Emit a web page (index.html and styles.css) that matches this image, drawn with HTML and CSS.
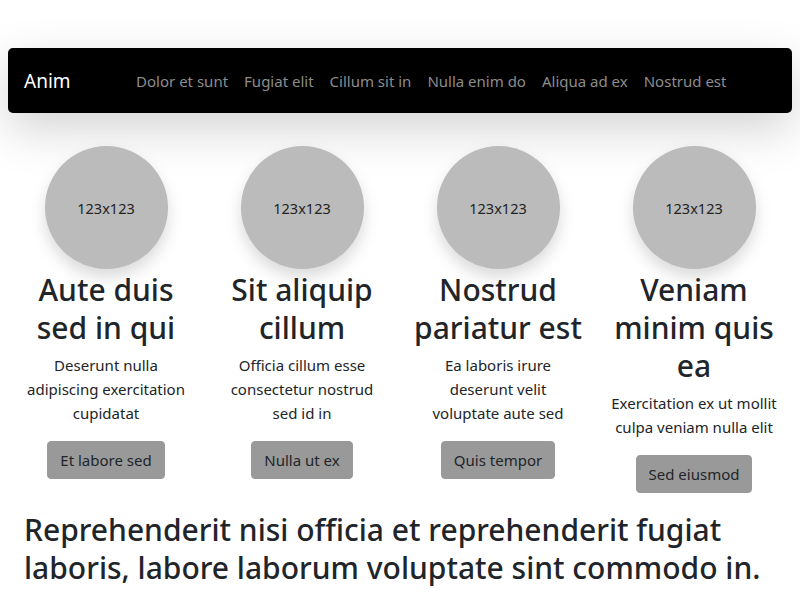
FILE: index.html
```html
<!DOCTYPE html>
<html lang="la">
<head>
<meta charset="utf-8">
<title>Anim</title>
<link rel="stylesheet" href="styles.css">
</head>
<body>
<div class="container">
  <nav class="navbar">
    <span class="brand">Anim</span>
    <ul class="nav">
      <li><a href="#">Dolor et sunt</a></li>
      <li><a href="#">Fugiat elit</a></li>
      <li><a href="#">Cillum sit in</a></li>
      <li><a href="#">Nulla enim do</a></li>
      <li><a href="#">Aliqua ad ex</a></li>
      <li><a href="#">Nostrud est</a></li>
    </ul>
  </nav>
  <div class="row">
    <div class="col">
      <div class="circle">123x123</div>
      <h2>Aute duis sed in qui</h2>
      <p>Deserunt nulla adipiscing exercitation cupidatat</p>
      <a class="btn" href="#">Et labore sed</a>
    </div>
    <div class="col">
      <div class="circle">123x123</div>
      <h2>Sit aliquip cillum</h2>
      <p>Officia cillum esse consectetur nostrud sed id in</p>
      <a class="btn" href="#">Nulla ut ex</a>
    </div>
    <div class="col">
      <div class="circle">123x123</div>
      <h2>Nostrud pariatur est</h2>
      <p>Ea laboris irure deserunt velit voluptate aute sed</p>
      <a class="btn" href="#">Quis tempor</a>
    </div>
    <div class="col">
      <div class="circle">123x123</div>
      <h2>Veniam minim quis ea</h2>
      <p>Exercitation ex ut mollit culpa veniam nulla elit</p>
      <a class="btn" href="#">Sed eiusmod</a>
    </div>
  </div>
  <h2 class="lead">Reprehenderit nisi officia et reprehenderit fugiat laboris, labore laborum voluptate sint commodo in.</h2>
</div>
</body>
</html>
```
FILE: styles.css
```css
* { box-sizing: border-box; }
html, body { margin: 0; padding: 0; }
body {
  background: #fff;
  color: #212529;
  font-family: "Noto Sans", "Open Sans", sans-serif;
  font-size: 15px;
  line-height: 24px;
}
.container {
  margin: 48px 8px 0;
}
.navbar {
  display: flex;
  align-items: center;
  height: 65px;
  padding: 0 16px;
  background: #000;
  border-radius: 5px;
  box-shadow: 0 16px 48px rgba(0, 0, 0, 0.175);
}
.brand {
  color: #fff;
  font-size: 19px;
  line-height: 30px;
  margin-right: 16px;
}
.nav {
  flex: 1;
  display: flex;
  justify-content: center;
  list-style: none;
  margin: 0;
  padding: 0;
}
.nav a {
  display: block;
  padding: 8px;
  color: #8c8c8c;
  text-decoration: none;
}
.row {
  display: flex;
  margin-top: 33px;
}
.col {
  flex: 1;
  padding: 0 12px;
  display: flex;
  flex-direction: column;
  align-items: center;
  text-align: center;
}
.circle {
  width: 123px;
  height: 123px;
  border-radius: 50%;
  background: #bbb;
  color: #222;
  font-size: 14.5px;
  display: flex;
  align-items: center;
  justify-content: center;
  box-shadow: 0 8px 16px rgba(0, 0, 0, 0.15);
}
h2 {
  font-size: 30px;
  font-weight: 500;
  line-height: 38px;
  margin: 2px 0 6px;
}
p {
  margin: 0 0 16px;
}
.col p {
  max-width: 165.6px;
}
.btn {
  display: inline-block;
  padding: 6px 12px;
  border: 1px solid #999;
  border-radius: 4px;
  background: #999;
  color: #212529;
  text-decoration: none;
}
.lead {
  text-align: left;
  padding: 0 16px;
  margin: 18px 0 0;
}
```
